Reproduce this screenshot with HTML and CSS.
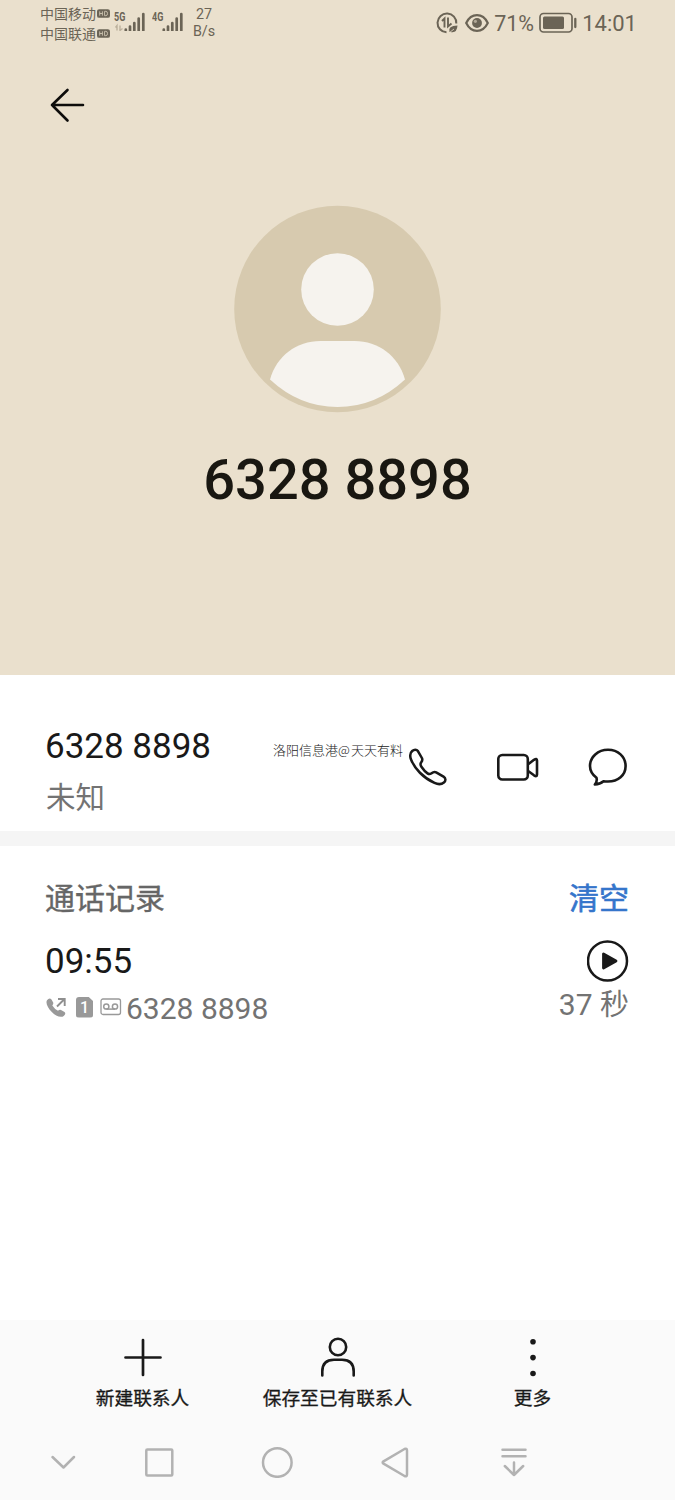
FILE: index.html
```html
<!DOCTYPE html>
<html lang="zh-CN">
<head>
<meta charset="utf-8">
<title>6328 8898</title>
<link rel="stylesheet" href="styles.css">
</head>
<body>
<main class="screen">
  <header class="hero">
    <div class="status">
      <div class="carriers">
        <div class="carrier">中国移动<svg width="13" height="9" viewBox="0 0 12 8"><rect width="12" height="8" rx="2" fill="#6b6456"/><path d="M2.500 2v4M5 2v4M2.500 4H5M7 2v4h1.200q1.500 0 1.500-2t-1.500-2z" fill="none" stroke="#d2c8b5" stroke-width=".8"/></svg></div>
        <div class="carrier">中国联通<svg width="13" height="9" viewBox="0 0 12 8"><rect width="12" height="8" rx="2" fill="#6b6456"/><path d="M2.500 2v4M5 2v4M2.500 4H5M7 2v4h1.200q1.500 0 1.500-2t-1.500-2z" fill="none" stroke="#d2c8b5" stroke-width=".8"/></svg></div>
      </div>
      <div class="signal">
        <span class="gen">5G</span>
        <svg width="32" height="20" viewBox="0 0 32 20"><path d="M11.800 18.500v1M16 15.500v4M20.300 12v7.500M24.700 7.500v12M29.300 3v16.500" fill="none" stroke="#6b6456" stroke-width="2.700" stroke-linecap="round"/><path d="M3 19.500v-5l-1.500 2M6 14.500v5l2.500-2" fill="none" stroke="#bcb19d" stroke-width="1.400"/></svg>
      </div>
      <div class="signal second">
        <span class="gen">4G</span>
        <svg width="32" height="20" viewBox="0 0 32 20"><path d="M11.800 18.500v1M16 15.500v4M20.300 12v7.500M24.700 7.500v12M29.300 3v16.500" fill="none" stroke="#6b6456" stroke-width="2.700" stroke-linecap="round"/></svg>
      </div>
      <div class="speed"><span>27</span><span>B/s</span></div>
      <div class="system">
        <svg class="data" width="22" height="22" viewBox="0 0 22 22" fill="none" stroke="#6b6456" stroke-width="2"><path d="M20.300 11.500A9.400 9.400 0 1 0 10.500 20.300"/><path d="M6 9L8.500 6.500V15.500M12 5.500v9L15.500 11.500" stroke-width="1.900"/><path d="M13.500 20Q11.500 13.500 21.500 13.500Q21 21.500 14.500 20z" fill="#6b6456" stroke="none"/><path d="M13 21l5-4" stroke="#eae0cd" stroke-width=".8"/></svg>
        <svg class="eye" width="24" height="18" viewBox="0 0 24 18"><path d="M1.200 9Q5 1.200 12 1.200T22.800 9Q19 16.800 12 16.800T1.200 9z" fill="none" stroke="#6b6456" stroke-width="2.200"/><circle cx="12" cy="9" r="4.900" fill="#6b6456"/><circle cx="10.400" cy="7.300" r="1.600" fill="#b1a897"/></svg>
        <span class="percent">71%</span>
        <svg class="battery" width="38" height="22" viewBox="0 0 38 22"><rect x="1" y="1.500" width="32" height="18.500" rx="3.500" fill="none" stroke="#6b6456" stroke-width="1.700"/><rect x="4" y="4.500" width="21" height="12.500" rx="1.500" fill="#6b6456"/><path d="M36.300 7v8" stroke="#6b6456" stroke-width="2.300" stroke-linecap="round"/></svg>
        <span class="clock">14:01</span>
      </div>
    </div>
    <svg class="back" width="36" height="36" viewBox="0 0 36 36" fill="none" stroke="#0e0d0b" stroke-width="2.600" stroke-linecap="round" stroke-linejoin="round"><path d="M18.500 3L3 18l15.500 15.500M3 18h31"/></svg>
    <svg class="avatar" width="207" height="208" viewBox="0.500 0 207 208"><circle cx="104" cy="104" r="103.300" fill="#d7caaf"/><circle cx="104" cy="84.500" r="36.300" fill="#f6f3ee"/><path d="M87 136H121C145 136 165 151 171.500 174.500Q142 202 104 202T36.500 174.500C43 151 63 136 87 136z" fill="#f6f3ee"/></svg>
    <h1 class="title">6328 8898</h1>
  </header>

  <section class="contact">
    <div class="contact-text">
      <div class="number">6328 8898</div>
      <div class="place">未知</div>
    </div>
    <div class="actions">
      <svg width="40" height="40" viewBox="0 0 40 40" fill="none" stroke="#191919" stroke-width="2.600" stroke-linejoin="round"><path transform="translate(.8 1.300) scale(.97)" d="M3.500 2.800C5.500 1 8 .9 9.400 2.800L13.500 10C14.500 12 14 13 12.700 14.600C11.700 16 12 17.500 13 19C15 22 17.200 24.400 19.300 25.800C20.800 26.800 22.200 26.600 23.500 25.700C25 24.500 26.300 23.800 28.200 24.800L35.800 29.200C38.300 30.800 38.300 33.500 36.200 35.200C33.800 37.200 30.500 37.500 26.500 35.700C15 30.500 6 21 2.300 11.500C.9 7.800 1.200 4.800 3.500 2.800z"/></svg>
      <svg width="44" height="40" viewBox="0 0 44 40" fill="none" stroke="#191919" stroke-width="2.600" stroke-linejoin="round"><rect x="2.300" y="8" width="29.500" height="24.500" rx="4"/><path d="M31.800 17.500l6.200-4.700Q41 10.800 41 13.500v14q0 2.700-3 .8l-6.200-4.500"/></svg>
      <svg width="40" height="40" viewBox="0 0 40 40" fill="none" stroke="#191919" stroke-width="2.600" stroke-linejoin="round"><path d="M6.800 37.500Q9.500 34.500 8.500 30.800C4.500 27.800 2 24 2 19C2 9.700 10 2.800 20 2.800S37.600 9.700 37.600 19S30 34.500 20 34.500Q17.500 34.500 15.500 34.200Q12 37.200 6.800 37.500z"/></svg>
    </div>
    <span class="watermark">洛阳信息港<span class="at">@</span>天天有料</span>
  </section>

  <section class="history">
    <div class="history-head"><h2>通话记录</h2><span class="clear">清空</span></div>
    <div class="call">
      <div class="call-info">
        <div class="time">09:55</div>
        <div class="detail">
          <svg class="outgoing" width="21" height="21" viewBox="0 0 21 21"><path d="M1 3.200Q3.500 0 5.500 2.500L7.200 5.500Q7.700 7 6.300 8.500Q8.500 12 12 13.800Q13.500 12.300 15 13L18.500 15Q20.300 16.500 18 18.700C15 21.500 9.500 18.800 5.800 15C1.300 10.500-.5 5.500 1 3.200z" fill="#999"/><path d="M11 9.500L18.500 2M12 2h6.700v7" fill="none" stroke="#8f8f8f" stroke-width="1.900"/></svg>
          <span class="sim">1</span>
          <svg class="record" width="22" height="18" viewBox="0 0 22 18" fill="none" stroke="#999"><rect x="1" y="1" width="19.500" height="15.500" rx="2" stroke-width="1.300"/><circle cx="6.300" cy="8.500" r="2.600" stroke-width="1.500"/><circle cx="15" cy="8.500" r="2.600" stroke-width="1.500"/><path d="M6.300 11.100H15" stroke-width="1.500"/></svg>
          <span>6328 8898</span>
        </div>
      </div>
      <div class="call-side">
        <svg width="42" height="42" viewBox="0 0 42 42"><circle cx="20.500" cy="21" r="19.500" fill="none" stroke="#191919" stroke-width="2.500"/><path d="M16.500 14v14l12.500-7z" fill="#191919" stroke="#191919" stroke-width="2.800" stroke-linejoin="round"/></svg>
        <div class="duration">37 <span>秒</span></div>
      </div>
    </div>
  </section>

  <footer class="footer">
    <div class="tools">
      <div class="tool"><svg width="40" height="40" viewBox="0 0 40 40"><path d="M20 3v35M2.500 20.500h35" stroke="#191919" stroke-width="2.700" stroke-linecap="round"/></svg><span>新建联系人</span></div>
      <div class="tool"><svg width="40" height="40" viewBox="0 0 40 40" fill="none" stroke="#191919" stroke-width="2.600" stroke-linecap="round"><circle cx="20" cy="10" r="8.200"/><path d="M4.300 38.500V34.500Q4.300 22.700 16 22.700H24Q35.700 22.700 35.700 34.500V38.500"/></svg><span>保存至已有联系人</span></div>
      <div class="tool"><svg width="40" height="40" viewBox="0 0 40 40" fill="#191919"><circle cx="20" cy="4.700" r="2.800"/><circle cx="20" cy="20.600" r="2.800"/><circle cx="20" cy="36.500" r="2.800"/></svg><span>更多</span></div>
    </div>
    <nav class="nav">
      <svg width="32" height="32" viewBox="0 0 32 32"><path d="M5.500 11L16.500 21.500l10.500-10.500"/></svg>
      <svg width="32" height="32" viewBox="0 0 32 32"><rect x="3.300" y="3.500" width="26" height="26" rx="1"/></svg>
      <svg width="32" height="32" viewBox="0 0 32 32"><circle cx="16.300" cy="16.500" r="14.300"/></svg>
      <svg width="32" height="32" viewBox="0 0 32 32"><path d="M4.500 15.300L25.500 3Q28 2 28 4.500v24Q28 31 25.500 30L4.500 17.700Q2.800 16.500 4.500 15.300z"/></svg>
      <svg width="32" height="32" viewBox="0 0 32 32"><path d="M4.500 3.700h23M4.500 10.300h23M16 16.500v12.500M6.800 20l9.200 9 9.200-9"/></svg>
    </nav>
  </footer>
</main>
</body>
</html>
```
FILE: styles.css
```css
* { box-sizing: border-box; }
body { margin: 0; background: #fff; color: #191919; font-family: Roboto, "Noto Sans CJK SC", sans-serif; }
svg { display: block; flex: none; }
h1, h2 { margin: 0; }

.screen { display: flex; flex-direction: column; width: 675px; height: 1500px; }

.hero { display: flex; flex-direction: column; align-items: center; height: 675px; background: #eae0cd; }
.status { display: flex; align-items: flex-start; width: 100%; height: 46px; padding: 3px 39px 0 40px; color: #6b6456; }
.carriers { width: 74px; font: 14px/20px "Noto Sans CJK SC", sans-serif; }
.carrier { display: flex; align-items: center; gap: 1px; height: 20px; white-space: nowrap; }
.signal { display: grid; width: 32px; padding-top: 8px; }
.signal > * { grid-area: 1 / 1; }
.second { margin-left: 6px; }
.gen { font: 700 12.500px/12px Roboto, sans-serif; transform: scaleX(.72); transform-origin: left; }
.speed { display: flex; flex-direction: column; align-items: center; width: 24px; margin-left: 8px; font-size: 14.300px; line-height: 17px; padding-top: 3px; }
.system { display: flex; align-items: center; margin-left: auto; height: 40px; font-size: 22px; }
.eye { margin-left: 7px; }
.percent { width: 41px; margin-left: 5px; font-size: 21.500px; }
.battery { margin-left: 4px; }
.clock { margin: 0 -1px 0 5px; }
.back { align-self: flex-start; margin: 41px 0 0 49px; }
.avatar { margin-top: 82px; }
.title { margin-top: 37px; font-size: 56px; line-height: 60px; font-weight: 500; color: #191711; }

.contact { position: relative; display: flex; justify-content: space-between; height: 156px; padding: 50px 47px 0 45px; }
.number { padding-top: 1px; font-size: 35px; line-height: 42px; }
.place { margin: 6px 0 0 1px; font: 29.500px/42px "Noto Sans CJK SC", sans-serif; color: #737373; }
.actions { display: flex; gap: 48px; padding-top: 22px; }
.watermark { position: absolute; left: 273px; top: 65px; display: flex; font: 300 13px/20px "Noto Sans CJK SC", sans-serif; color: #222; white-space: nowrap; }
.at { width: 13px; }

.history { flex: 1; padding: 29px 46px 0 45px; border-top: 15px solid #f5f5f5; }
.history-head { display: flex; justify-content: space-between; font: 400 30px/42px "Noto Sans CJK SC", sans-serif; -webkit-text-stroke: .35px; }
.history-head h2 { font: inherit; color: #666; }
.clear { color: #3575cb; -webkit-text-stroke: .6px; }
.call { display: flex; justify-content: space-between; padding-top: 22px; }
.time { padding-top: 1px; font-size: 35px; line-height: 44px; }
.detail { display: flex; align-items: center; height: 40px; margin-top: 5px; font-size: 30px; line-height: 40px; color: #737373; }
.outgoing { margin: -4px 0 0 1px; }
.sim { width: 17px; height: 21px; margin: -4px 0 0 9px; border-radius: 3px; background: #999; color: #fff; clip-path: polygon(0 0, 72% 0, 100% 22%, 100% 100%, 0 100%); text-align: center; font-size: 16px; line-height: 21px; font-weight: 500; }
.record { margin: -4px 4px 0 7px; }
.call-side { display: flex; flex-direction: column; align-items: flex-end; padding-top: 1px; }
.duration { margin-top: 3px; font-size: 30px; line-height: 40px; color: #737373; }
.duration span { font-size: 29px; }

.footer { height: 180px; background: #fafafa; }
.tools { display: grid; grid-template-columns: repeat(3, 195px); justify-content: center; height: 124px; padding-top: 17px; }
.tool { display: flex; flex-direction: column; align-items: center; gap: 8px; font: 400 18.700px/24px "Noto Sans CJK SC", sans-serif; -webkit-text-stroke: .3px; }
.nav { display: grid; grid-template-columns: 96px 118px 118px 119px 32px; padding: 2px 0 0 47px; }
.nav svg { fill: none; stroke: #b2b2b2; stroke-width: 2.500; stroke-linecap: round; stroke-linejoin: round; }
```
